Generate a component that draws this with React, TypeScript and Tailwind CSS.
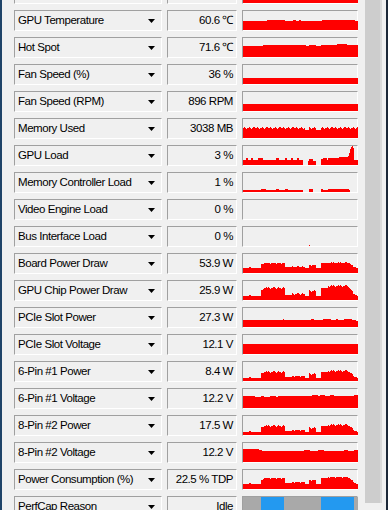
import React from "react"

type Seg = [number, number]

// build a 115 column height array from run-length segments
function fromSegs(segs: Seg[]): number[] {
  const out: number[] = []
  segs.forEach(([n, h]) => {
    for (let i = 0; i < n; i++) out.push(h)
  })
  while (out.length < 115) out.push(out.length ? out[out.length - 1] : 0)
  return out.slice(0, 115)
}

// small deterministic wobble so the load graphs look sampled
const J = [0, 1, 0, -1, 0, 0, 1, 1, 0, -1, 0, 1, 0, 0, -1, 0, 1, 0, 1, 0, -1, 0, 0, 1]

// shared load pattern (0..1.35) used by the power graphs
const pattern: number[] = Array.from({ length: 115 }, (_, i) => {
  if (i < 18) return i >= 6 && i <= 7 ? 0.12 : 0
  if (i < 20) return 0.8
  if (i < 42) return 1 + J[i % J.length] * 0.1
  if (i < 49) return 0.12
  if (i < 62) return 0.28 + J[i % J.length] * 0.12
  if (i < 66) return 0
  if (i < 73) return 0.65 + J[i % J.length] * 0.12
  if (i < 78) return 0
  if (i < 85) return 1.05
  if (i < 106) return 1.2 + J[i % J.length] * 0.12
  if (i < 110) return 1 - (i - 106) * 0.12
  return Math.max(0, 0.3 - (i - 110) * 0.07)
})

function power(base: number, amp: number): number[] {
  return pattern.map((p) => Math.round(base + p * amp))
}

function flat(h: number): number[] {
  return Array.from({ length: 115 }, () => h)
}

const memUsed = Array.from({ length: 115 }, (_, i) => {
  const n = [10, 11, 10, 9, 10, 10, 11, 10, 9, 10, 11, 11, 10][i % 13]
  if (i >= 62 && i < 66) return 8
  if (i >= 73 && i < 78) return 8
  return n
})

const rows: { label: string; value: string; data: number[] | "perf" }[] = [
  { label: "", value: "", data: flat(12) },
  {
    label: "GPU Temperature",
    value: "60.6 \u2103",
    data: fromSegs([[24, 9], [18, 10], [8, 9], [3, 10], [3, 9], [2, 10], [21, 9], [33, 10], [3, 9]]),
  },
  {
    label: "Hot Spot",
    value: "71.6 \u2103",
    data: fromSegs([[20, 11], [43, 12], [3, 11], [7, 12], [5, 11], [16, 12], [10, 13], [11, 12]]),
  },
  { label: "Fan Speed (%)", value: "36 %", data: flat(6) },
  { label: "Fan Speed (RPM)", value: "896 RPM", data: flat(7) },
  { label: "Memory Used", value: "3038 MB", data: memUsed },
  {
    label: "GPU Load",
    value: "3 %",
    data: fromSegs([
      [3, 5], [2, 7], [3, 5], [2, 7], [5, 5], [5, 7], [13, 5], [3, 7], [6, 5], [2, 7],
      [4, 5], [2, 7], [4, 5], [2, 7], [4, 5], [5, 0], [1, 4], [4, 6], [3, 4], [5, 0],
      [2, 6], [4, 7], [1, 5], [11, 7], [9, 8], [1, 9], [1, 12], [1, 16], [1, 18], [1, 19],
      [1, 17], [5, 5],
    ]),
  },
  {
    label: "Memory Controller Load",
    value: "1 %",
    data: fromSegs([
      [18, 2], [5, 3], [10, 2], [3, 3], [6, 2], [3, 3], [15, 2], [6, 0], [4, 3], [8, 0],
      [2, 3], [5, 2], [21, 3], [1, 2], [8, 0],
    ]),
  },
  { label: "Video Engine Load", value: "0 %", data: flat(0) },
  { label: "Bus Interface Load", value: "0 %", data: fromSegs([[66, 0], [1, 1], [48, 0]]) },
  { label: "Board Power Draw", value: "53.9 W", data: power(5, 4.5) },
  { label: "GPU Chip Power Draw", value: "25.9 W", data: power(4, 8) },
  {
    label: "PCIe Slot Power",
    value: "27.3 W",
    data: fromSegs([[40, 7], [1, 8], [27, 7], [3, 8], [9, 7], [8, 8], [5, 7], [2, 8], [6, 7], [8, 8], [4, 7], [2, 6], [3, 7]]),
  },
  { label: "PCIe Slot Voltage", value: "12.1 V", data: flat(10) },
  { label: "6-Pin #1 Power", value: "8.4 W", data: power(3, 6) },
  {
    label: "6-Pin #1 Voltage",
    value: "12.2 V",
    data: fromSegs([[12, 12], [6, 11], [3, 12], [6, 11], [6, 12], [2, 11], [16, 12], [18, 12], [6, 13], [2, 12], [5, 13], [5, 12], [4, 13], [10, 12], [10, 12], [4, 13]]),
  },
  { label: "8-Pin #2 Power", value: "17.5 W", data: power(3, 6) },
  {
    label: "8-Pin #2 Voltage",
    value: "12.2 V",
    data: fromSegs([[16, 13], [3, 12], [42, 11], [6, 12], [8, 11], [6, 12], [20, 11], [4, 12], [6, 11], [4, 12], [3, 11], [6, 13]]),
  },
  { label: "Power Consumption (%)", value: "22.5 % TDP", data: power(5, 5.5) },
  { label: "PerfCap Reason", value: "Idle", data: "perf" },
]

function Graph({ data }: { data: number[] | "perf" }) {
  if (data === "perf") {
    return (
      <svg width="115" height="19" className="block">
        <rect x="0" y="0" width="115" height="19" fill="#a9a9a9" />
        <rect x="18" y="0" width="23" height="19" fill="#2399f0" />
        <rect x="78" y="0" width="33" height="19" fill="#2399f0" />
      </svg>
    )
  }
  let d = ""
  data.forEach((h, i) => {
    const hh = Math.max(0, Math.min(19, h))
    if (hh > 0) d += `M${i} ${19 - hh}h1v${hh}h-1z`
  })
  return (
    <svg width="115" height="19" className="block">
      <path d={d} fill="#ff0000" />
    </svg>
  )
}

function Sunken({ className, children }: { className: string; children?: React.ReactNode }) {
  return (
    <div
      className={`h-[21px] border-t border-l border-t-[#a0a0a0] border-l-[#a0a0a0] border-b border-r border-b-white border-r-white bg-[#f0f0f0] ${className}`}
    >
      {children}
    </div>
  )
}

export default function App() {
  return (
    <div className="h-[510px] w-[388px] overflow-hidden flex bg-[#f0f0f0] text-black font-['Liberation_Sans',Arial,sans-serif] text-[11.5px] tracking-[-0.45px]">
      <div className="w-[2px] bg-[#1f4468]" />
      <div className="flex-1 flex flex-col gap-[6px] -mt-[17px] pl-[12px]">
        {rows.map((r, i) => (
          <div key={i} className="flex items-center gap-[5px] shrink-0">
            <Sunken className="w-[148px] flex items-center justify-between pl-[3px] pr-[6px]">
              <span className="whitespace-nowrap">{r.label}</span>
              <svg width="7" height="4" className="block">
                <polygon points="0,0 7,0 3.5,4" fill="#000" />
              </svg>
            </Sunken>
            <Sunken className="w-[70px] flex items-center justify-end pr-[3px]">
              <span className="whitespace-nowrap">{r.value}</span>
            </Sunken>
            <Sunken className="w-[116px]">
              <Graph data={r.data} />
            </Sunken>
          </div>
        ))}
      </div>
      <div className="w-[22px] flex flex-col">
        <div className="h-[503px] ml-[1px] w-[17px] bg-[#cdcdcd] border-r-2 border-r-[#dadada]" />
      </div>
      <div className="w-[2px] bg-[#1c2838]" />
    </div>
  )
}
